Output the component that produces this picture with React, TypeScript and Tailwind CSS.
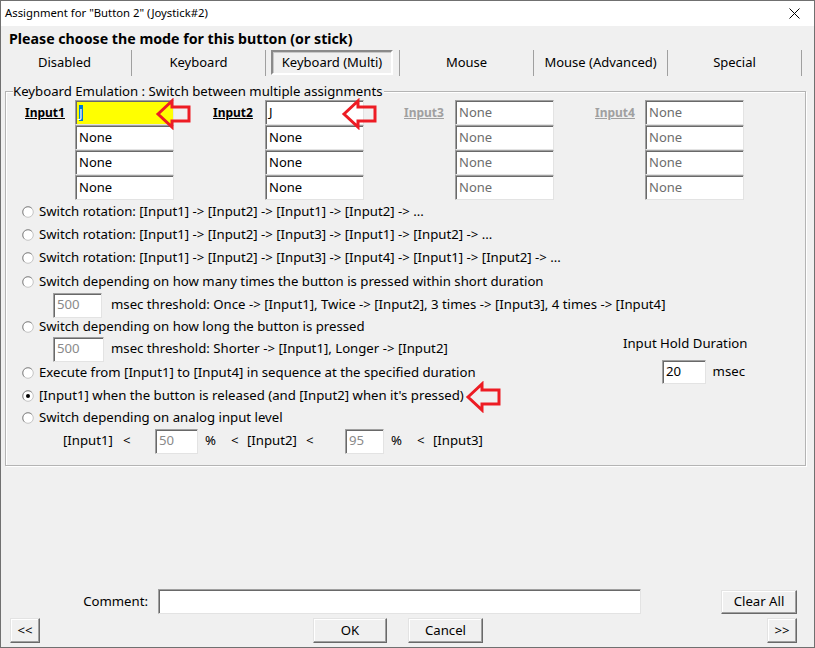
import React from "react";

const sunken =
  "border border-t-[#a0a0a0] border-l-[#a0a0a0] border-r-[#e3e3e3] border-b-[#e3e3e3] shadow-[inset_1px_1px_0_#696969] bg-white";
const raised =
  "border border-t-[#e3e3e3] border-l-[#e3e3e3] border-r-[#696969] border-b-[#696969] shadow-[inset_-1px_-1px_0_#a0a0a0,inset_1px_1px_0_#ffffff] bg-[#f0f0f0] flex items-center justify-center";

function Radio({ checked = false }: { checked?: boolean }) {
  return (
    <svg width="12" height="12" viewBox="0 0 12 12" className="shrink-0">
      <circle cx="6" cy="6" r="5.3" fill="#ffffff" stroke="#c4c4c4" strokeWidth="1" />
      <path d="M2.25 9.75 A5.3 5.3 0 0 1 9.75 2.25" stroke="#8c8c8c" strokeWidth="1" fill="none" />
      {checked && <circle cx="6" cy="6" r="2" fill="#000000" />}
    </svg>
  );
}

function Arrow({ className }: { className: string }) {
  return (
    <svg width="37" height="32" viewBox="0 0 37 32" className={className}>
      <polygon
        points="3,16 17,3 17,9 34,9 34,23 17,23 17,29"
        fill="none"
        stroke="#ed1c24"
        strokeWidth="3"
        strokeLinejoin="miter"
      />
    </svg>
  );
}

function Box({ text, gray = false, w = 99 }: { text: string; gray?: boolean; w?: number }) {
  return (
    <div
      className={`${sunken} h-[25px] flex items-center pl-[3px] text-[13px] ${gray ? "text-[#6d6d6d]" : "text-black"}`}
      style={{ width: w }}
    >
      {text}
    </div>
  );
}

function InputCol({
  label,
  gray,
  labelW,
  first,
  firstNode,
  arrow,
}: {
  label: string;
  gray?: boolean;
  labelW: number;
  first: string;
  firstNode?: React.ReactNode;
  arrow?: React.ReactNode;
}) {
  return (
    <div className="flex">
      <div
        className={`h-[25px] flex items-center font-bold underline text-[12px] ${gray ? "text-[#a0a0a0]" : "text-black"}`}
        style={{ width: labelW }}
      >
        {label}
      </div>
      <div className="relative flex flex-col">
        {firstNode ?? <Box text={first} gray={gray} />}
        <Box text="None" gray={gray} />
        <Box text="None" gray={gray} />
        <Box text="None" gray={gray} />
        {arrow}
      </div>
    </div>
  );
}

function RadioRow({ text, h, checked, children }: { text: string; h: number; checked?: boolean; children?: React.ReactNode }) {
  return (
    <div className="relative flex items-center pl-[16px] gap-[5px]" style={{ height: h }}>
      <Radio checked={checked} />
      <span className="whitespace-nowrap">{text}</span>
      {children}
    </div>
  );
}

export default function App() {
  return (
    <div className="w-[815px] h-[648px] border border-[#707070] bg-[#f0f0f0] flex flex-col font-['Noto_Sans',sans-serif] text-[13.2px] text-black overflow-hidden">
      {/* Title bar */}
      <div className="h-[25px] bg-white flex items-center justify-between pl-[4px] pr-[14px] text-[11.3px] shrink-0">
        <span>Assignment for "Button 2" (Joystick#2)</span>
        <svg width="11" height="11" viewBox="0 0 11 11">
          <path d="M0.5 0.5 L10.5 10.5 M10.5 0.5 L0.5 10.5" stroke="#000" strokeWidth="1" />
        </svg>
      </div>

      {/* Header */}
      <div className="h-[24px] pt-[3px] pl-[8px] font-bold text-[14.2px] leading-[20px] shrink-0">
        Please choose the mode for this button (or stick)
      </div>

      {/* Tabs */}
      <div className="grid grid-cols-6 w-[804px] ml-[-3px] h-[26px] shrink-0 text-[13px]">
        <div className="border-r border-[#a0a0a0] flex items-center justify-center">Disabled</div>
        <div className="border-r border-[#a0a0a0] flex items-center justify-center">Keyboard</div>
        <div className="border-r border-[#a0a0a0] flex items-stretch pl-[5px] pr-[6px] pb-[1px]">
          <div className="flex-1 flex items-center justify-center border-2 border-t-[#8a8a8a] border-l-[#8a8a8a] border-r-[#ffffff] border-b-[#ffffff] shadow-[inset_1px_1px_0_#c8c8c8]">
            Keyboard (Multi)
          </div>
        </div>
        <div className="border-r border-[#a0a0a0] flex items-center justify-center">Mouse</div>
        <div className="border-r border-[#a0a0a0] flex items-center justify-center">Mouse (Advanced)</div>
        <div className="border-r border-[#a0a0a0] flex items-center justify-center">Special</div>
      </div>

      {/* Group box */}
      <div className="relative mt-[15px] ml-[4px] w-[801px] h-[375px] border border-[#b4b4b4] shadow-[1px_1px_0_#ffffff,inset_1px_1px_0_#ffffff] shrink-0">
        <span className="absolute left-[7px] -top-[10px] leading-[18px] bg-[#f0f0f0] pr-[1px] whitespace-nowrap">
          Keyboard Emulation : Switch between multiple assignments
        </span>

        {/* Inputs */}
        <div className="flex pt-[8px] pl-[19px]">
          <InputCol
            label="Input1"
            labelW={50}
            first="J"
            firstNode={
              <div className={`${sunken} !bg-[#ffff00] h-[25px] w-[99px] flex items-center pl-[3px] text-[13px]`}>
                <span className="bg-[#0078d7] text-white leading-[16px]">J</span>
              </div>
            }
            arrow={<Arrow className="absolute left-[80px] -top-[2px]" />}
          />
          <div className="w-[39px]" />
          <InputCol label="Input2" labelW={52} first="J" arrow={<Arrow className="absolute left-[76px] -top-[2px]" />} />
          <div className="w-[40px]" />
          <InputCol label="Input3" gray labelW={51} first="None" />
          <div className="w-[41px]" />
          <InputCol label="Input4" gray labelW={50} first="None" />
        </div>

        {/* Radio options */}
        <div className="flex flex-col">
          <RadioRow h={23} text="Switch rotation: [Input1] -> [Input2] -> [Input1] -> [Input2] -> ..." />
          <RadioRow h={23} text="Switch rotation: [Input1] -> [Input2] -> [Input3] -> [Input1] -> [Input2] -> ..." />
          <RadioRow h={24} text="Switch rotation: [Input1] -> [Input2] -> [Input3] -> [Input4] -> [Input1] -> [Input2] -> ..." />
          <RadioRow h={23} text="Switch depending on how many times the button is pressed within short duration" />
          <div className="flex items-center h-[24px] pl-[47px]">
            <div className={`${sunken} w-[49px] h-[25px] flex items-center pl-[3px] text-[#8a8a8a]`}>500</div>
            <span className="ml-[9px] whitespace-nowrap">
              msec threshold: Once -&gt; [Input1], Twice -&gt; [Input2], 3 times -&gt; [Input3], 4 times -&gt; [Input4]
            </span>
          </div>

          <div className="flex">
            <div className="flex flex-col">
              <RadioRow h={20} text="Switch depending on how long the button is pressed" />
              <div className="flex items-center h-[24px] pl-[47px]">
                <div className={`${sunken} w-[51px] h-[25px] flex items-center pl-[3px] text-[#8a8a8a]`}>500</div>
                <span className="ml-[7px] whitespace-nowrap">msec threshold: Shorter -&gt; [Input1], Longer -&gt; [Input2]</span>
              </div>
              <RadioRow h={24} text="Execute from [Input1] to [Input4] in sequence at the specified duration" />
            </div>
            <div className="ml-auto mr-[60px] w-[122px] flex flex-col">
              <div className="mt-[18px] h-[18px] flex items-center whitespace-nowrap">Input Hold Duration</div>
              <div className="mt-[7px] flex items-center pl-[39px]">
                <div className={`${sunken} w-[45px] h-[24px] flex items-center pl-[3px]`}>20</div>
                <span className="ml-[7px]">msec</span>
              </div>
            </div>
          </div>

          <RadioRow h={22} checked text="[Input1] when the button is released (and [Input2] when it's pressed)">
            <Arrow className="absolute left-[459px] top-[-4px]" />
          </RadioRow>
          <RadioRow h={22} text="Switch depending on analog input level" />
          <div className="flex items-center h-[24px] pl-[57px] whitespace-nowrap">
            <span className="w-[60px]">[Input1]</span>
            <span className="w-[32px]">&lt;</span>
            <div className={`${sunken} w-[43px] h-[25px] flex items-center pl-[3px] text-[#8a8a8a]`}>50</div>
            <span className="ml-[7px] w-[26px]">%</span>
            <span className="w-[16px]">&lt;</span>
            <span className="w-[59px]">[Input2]</span>
            <span className="w-[39px]">&lt;</span>
            <div className={`${sunken} w-[39px] h-[25px] flex items-center pl-[3px] text-[#8a8a8a]`}>95</div>
            <span className="ml-[7px] w-[26px]">%</span>
            <span className="w-[16px]">&lt;</span>
            <span>[Input3]</span>
          </div>
        </div>
      </div>

      {/* Comment row */}
      <div className="mt-[123px] flex items-center h-[25px] shrink-0">
        <span className="w-[147px] text-right">Comment:</span>
        <div className={`${sunken} ml-[10px] w-[483px] h-[25px]`} />
        <button className={`${raised} ml-[80px] w-[76px] h-[24px]`}>Clear All</button>
      </div>

      {/* Buttons row */}
      <div className="mt-[4px] flex items-center h-[25px] shrink-0">
        <button className={`${raised} ml-[9px] w-[30px] h-[25px]`}>&lt;&lt;</button>
        <button className={`${raised} ml-[273px] w-[74px] h-[25px]`}>OK</button>
        <button className={`${raised} ml-[21px] w-[75px] h-[25px]`}>Cancel</button>
        <button className={`${raised} ml-[284px] w-[30px] h-[25px]`}>&gt;&gt;</button>
      </div>
    </div>
  );
}
